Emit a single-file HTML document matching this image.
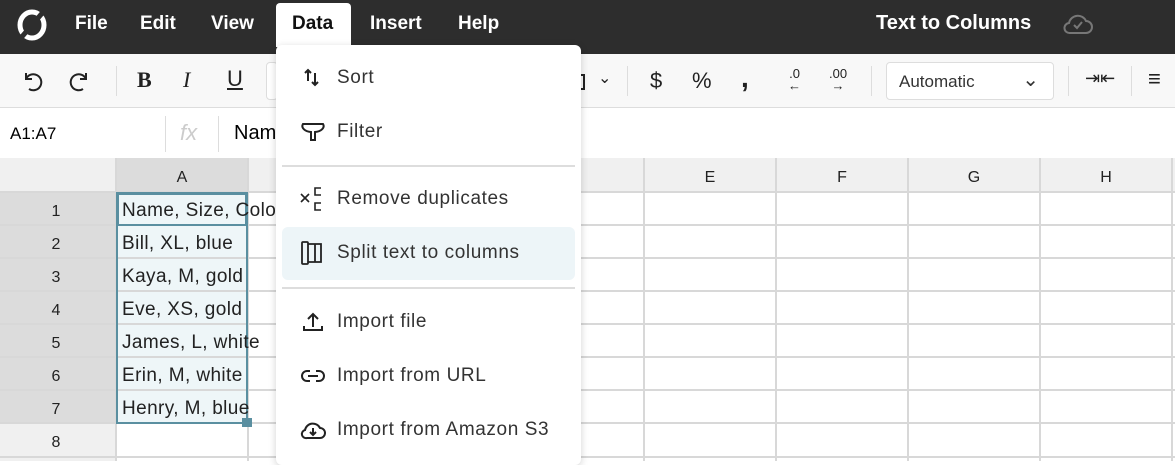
<!DOCTYPE html>
<html><head><style>
*{margin:0;padding:0;box-sizing:border-box}
body{width:1175px;height:461px;overflow:hidden;font-family:"Liberation Sans",sans-serif;background:#fff;position:relative}
.top{position:absolute;left:0;top:0;width:1175px;height:54px;background:#2d2d2d;color:#fff;font-weight:bold;font-size:19px}
.top span{position:absolute;top:13px}
.tb{position:absolute;top:54px;left:0;width:1175px;height:54px;background:#f8f8f8;border-bottom:1px solid #ddd}
.fb{position:absolute;top:108px;left:0;width:1175px;height:50px;background:#fff}
.ic{position:absolute;font-size:22px;color:#222}
.sep{position:absolute;top:66px;width:1px;height:30px;background:#ddd}
.grid{position:absolute;top:158px;left:0}
.menu{position:absolute;left:276px;top:45px;width:305px;height:420px;background:#fff;border-radius:6px;box-shadow:0 2px 8px rgba(0,0,0,.18)}
.mi{position:absolute;left:61px;font-size:19px;letter-spacing:0.6px;color:#333}
.mic{position:absolute;left:24px;width:26px;height:26px}
.hr{position:absolute;left:6px;width:293px;height:2px;background:#ddd}
</style></head><body>
<div class="top">
<svg style="position:absolute;left:17px;top:9px" width="30" height="32" viewBox="0 0 30 32"><ellipse cx="15" cy="16" rx="12" ry="13" fill="none" stroke="#fff" stroke-width="5"/><line x1="3" y1="30" x2="27" y2="2" stroke="#2d2d2d" stroke-width="5"/></svg>
<span style="left:75px">File</span><span style="left:140px">Edit</span><span style="left:211px">View</span>
<div style="position:absolute;left:276px;top:3px;width:75px;height:44px;background:#fff;border-radius:4px 4px 0 0"></div>
<span style="left:292px;color:#111">Data</span><span style="left:370px">Insert</span><span style="left:458px">Help</span>
<span style="left:876px;font-size:20px;top:12px">Text to Columns</span>
<svg style="position:absolute;left:1063px;top:13px" width="30" height="22" viewBox="0 0 30 22"><path d="M7 20h16a6 6 0 0 0 0-12a9 9 0 0 0-17 2a5 5 0 0 0 1 10z" fill="none" stroke="#777" stroke-width="2"/><path d="M11 12l3 3l5-6" fill="none" stroke="#777" stroke-width="2"/></svg>
</div>
<div class="tb">
<svg style="position:absolute;left:20px;top:16px" width="26" height="22" viewBox="0 0 26 22" fill="none" stroke="#222" stroke-width="2"><path d="M6 9a8 8 0 1 1 3 10M6 3v6h6"/></svg>
<svg style="position:absolute;left:66px;top:16px" width="26" height="22" viewBox="0 0 26 22" fill="none" stroke="#222" stroke-width="2"><path d="M20 9a8 8 0 1 0-3 10M20 3v6h-6"/></svg>
<div class="sep" style="left:116px;top:12px"></div>
<span class="ic" style="left:137px;top:13px;font-family:'Liberation Serif';font-weight:bold">B</span>
<span class="ic" style="left:183px;top:13px;font-family:'Liberation Serif';font-style:italic">I</span>
<span class="ic" style="left:227px;top:12px;text-decoration:underline">U</span>
<div style="position:absolute;left:266px;top:8px;width:12px;height:38px;border:1px solid #ddd;border-radius:4px;background:#fff"></div>
<div style="position:absolute;left:581px;top:20px;width:4px;height:16px;border:2px solid #222;border-left:none"></div>
<span class="ic" style="left:598px;top:14px;font-size:16px">⌄</span>
<div class="sep" style="left:627px;top:12px"></div>
<span class="ic" style="left:650px;top:14px">$</span><span class="ic" style="left:692px;top:14px">%</span><span class="ic" style="left:741px;top:8px;font-weight:bold;font-size:28px">,</span>
<span class="ic" style="left:788px;top:14px;font-size:13px;line-height:12px;text-align:center">.0<br>←</span><span class="ic" style="left:829px;top:14px;font-size:13px;line-height:12px;text-align:center">.00<br>→</span>
<div class="sep" style="left:871px;top:12px"></div>
<div style="position:absolute;left:886px;top:8px;width:168px;height:38px;border:1px solid #ddd;border-radius:4px;background:#fff;font-size:17px;color:#333;padding:9px 12px">Automatic<span style="position:absolute;right:14px;top:4px;font-size:20px">⌄</span></div>
<div class="sep" style="left:1068px;top:12px"></div>
<span class="ic" style="left:1085px;top:14px;font-size:18px">⇥⇤</span>
<div class="sep" style="left:1131px;top:12px"></div>
<span class="ic" style="left:1148px;top:12px">≡</span>
</div>
<div class="fb">
<span style="position:absolute;left:10px;top:16px;font-size:17px">A1:A7</span>
<div style="position:absolute;left:165px;top:8px;width:1px;height:36px;background:#ddd"></div>
<span style="position:absolute;left:180px;top:12px;font-size:22px;color:#ccc;font-style:italic">fx</span>
<div style="position:absolute;left:218px;top:8px;width:1px;height:36px;background:#ddd"></div>
<span style="position:absolute;left:234px;top:14px;font-size:20px">Name</span>
</div>
<svg class="grid" width="1175" height="303" viewBox="0 158 1175 303" font-family="Liberation Sans" font-size="16">
<rect x="0" y="158" width="1175" height="34" fill="#f0f0f0"/>
<rect x="116" y="158" width="132" height="34" fill="#dcdcdc"/>
<rect x="0" y="192" width="116" height="231" fill="#dcdcdc"/>
<rect x="0" y="423" width="116" height="38" fill="#f0f0f0"/>
<rect x="116" y="192" width="132" height="231" fill="#eef6f8"/>
<g stroke="#d8d8d8" stroke-width="2">
<line x1="0" y1="192" x2="1175" y2="192"/>
<line x1="0" y1="225" x2="1175" y2="225"/><line x1="0" y1="258" x2="1175" y2="258"/><line x1="0" y1="291" x2="1175" y2="291"/><line x1="0" y1="324" x2="1175" y2="324"/><line x1="0" y1="357" x2="1175" y2="357"/><line x1="0" y1="390" x2="1175" y2="390"/><line x1="0" y1="423" x2="1175" y2="423"/><line x1="0" y1="457" x2="1175" y2="457"/>
<line x1="116" y1="158" x2="116" y2="461"/><line x1="248" y1="158" x2="248" y2="461"/><line x1="380" y1="158" x2="380" y2="461"/><line x1="512" y1="158" x2="512" y2="461"/><line x1="644" y1="158" x2="644" y2="461"/><line x1="776" y1="158" x2="776" y2="461"/><line x1="908" y1="158" x2="908" y2="461"/><line x1="1040" y1="158" x2="1040" y2="461"/><line x1="1172" y1="158" x2="1172" y2="461"/>
</g>
<rect x="117" y="193" width="130" height="230" fill="none" stroke="#5a8fa0" stroke-width="2"/>
<rect x="118" y="194" width="128" height="31" fill="#eef6f8" stroke="#5a8fa0" stroke-width="2"/>
<rect x="242" y="418" width="10" height="9" fill="#5a8fa0"/>
<g fill="#222" text-anchor="middle"><text x="182" y="182">A</text><text x="710" y="182">E</text><text x="842" y="182">F</text><text x="974" y="182">G</text><text x="1106" y="182">H</text>
<text x="56" y="216">1</text><text x="56" y="249">2</text><text x="56" y="282">3</text><text x="56" y="315">4</text><text x="56" y="348">5</text><text x="56" y="381">6</text><text x="56" y="414">7</text><text x="56" y="447">8</text></g>
<g fill="#222" font-size="19" letter-spacing="0.4"><text x="122" y="216">Name, Size, Color</text><text x="122" y="249">Bill, XL, blue</text><text x="122" y="282">Kaya, M, gold</text><text x="122" y="315">Eve, XS, gold</text><text x="122" y="348">James, L, white</text><text x="122" y="381">Erin, M, white</text><text x="122" y="414">Henry, M, blue</text></g>
</svg>
<div class="menu">
<svg class="mic" style="top:20px" viewBox="0 0 26 26" fill="none" stroke="#222" stroke-width="2"><path d="M8 16V5M5 8l3-3l3 3M15 8v12M12 17l3 3l3-3"/></svg><span class="mi" style="top:22px">Sort</span>
<svg class="mic" style="top:74px" viewBox="0 0 26 26" fill="none" stroke="#222" stroke-width="2"><path d="M3 5h20a10 6 0 0 1-8 8v8h-4v-8a10 6 0 0 1-8-8z"/></svg><span class="mi" style="top:76px">Filter</span>
<div class="hr" style="top:120px"></div>
<svg class="mic" style="top:141px" viewBox="0 0 26 26" fill="none" stroke="#222" stroke-width="1.6"><path d="M1 8l8 8M9 8l-8 8M21 2h-6v7h6M21 17h-6v7h6"/></svg><span class="mi" style="top:143px">Remove duplicates</span>
<div style="position:absolute;left:6px;top:182px;width:293px;height:53px;background:#edf5f8;border-radius:6px"></div>
<svg class="mic" style="top:195px" viewBox="0 0 26 26" fill="none" stroke="#222" stroke-width="1.8"><rect x="2" y="2" width="6" height="22" rx="1"/><path d="M8 4h13v18H8M15 4v18"/></svg><span class="mi" style="top:197px">Split text to columns</span>
<div class="hr" style="top:242px"></div>
<svg class="mic" style="top:264px" viewBox="0 0 26 26" fill="none" stroke="#222" stroke-width="2"><path d="M13 18V5M8 10l5-5l5 5M4 17v4h18v-4"/></svg><span class="mi" style="top:266px">Import file</span>
<svg class="mic" style="top:318px" viewBox="0 0 26 26" fill="none" stroke="#222" stroke-width="2"><path d="M10 8H7a5 5 0 0 0 0 10h3M16 8h3a5 5 0 0 1 0 10h-3M8 13h10"/></svg><span class="mi" style="top:320px">Import from URL</span>
<svg class="mic" style="top:372px" viewBox="0 0 26 26" fill="none" stroke="#222" stroke-width="2"><path d="M7 21h13a5 5 0 0 0 0-10a8 8 0 0 0-15 2a4 4 0 0 0 2 8z"/><path d="M13 11v7M10 15l3 3l3-3"/></svg><span class="mi" style="top:374px">Import from Amazon S3</span>
</div>
</body></html>
